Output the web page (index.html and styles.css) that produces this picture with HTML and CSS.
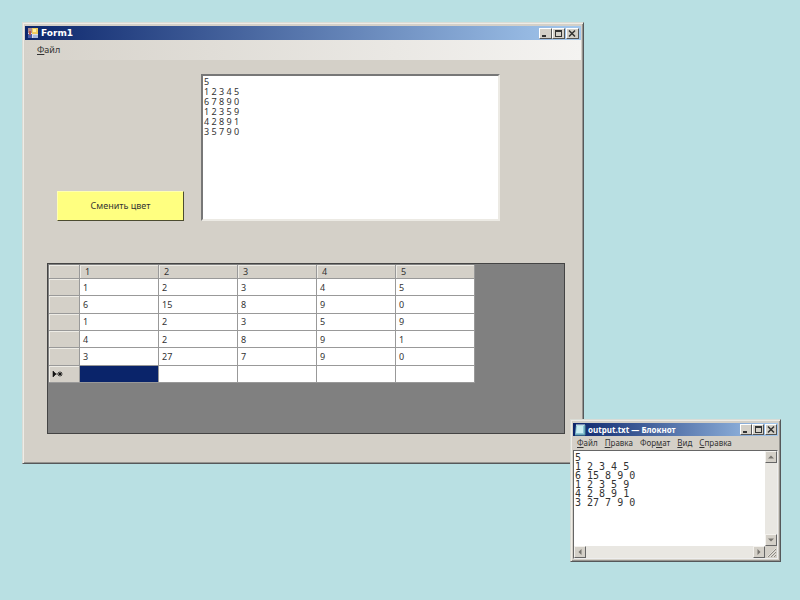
FILE: index.html
```html
<!DOCTYPE html>
<html lang="ru">
<head>
<meta charset="utf-8">
<title>Form1</title>
<link rel="stylesheet" href="styles.css">
</head>
<body>
<main class="desktop">
  <section class="window form-window" aria-label="Form1">
    <header class="titlebar">
      <svg class="app-icon" viewBox="0 0 12 12" aria-hidden="true">
        <rect x="1" y="1" width="10" height="10" fill="#d9dde8"/>
        <rect x="1" y="1" width="4" height="5" fill="#b08a8c"/>
        <rect x="5" y="1" width="6" height="6" fill="#f0cc60"/>
        <rect x="6" y="2" width="3" height="3" fill="#fdf0a8"/>
        <rect x="1" y="7" width="4" height="4" fill="#4a5ea8"/>
        <rect x="2" y="4" width="2" height="4" fill="#b8564c"/>
        <rect x="6" y="8" width="5" height="3" fill="#a9bbe0"/>
      </svg>
      <h1 class="title">Form1</h1>
      <div class="controls">
        <button class="ctl" aria-label="Свернуть"><svg viewBox="0 0 10 9"><path d="M2 7h4" stroke="#333" stroke-width="2"/></svg></button>
        <button class="ctl" aria-label="Развернуть"><svg viewBox="0 0 10 9"><path d="M2 1.500h7M2.500 1v7M8.500 1v7M2 7.500h7M2 2.500h7" stroke="#333"/></svg></button>
        <button class="ctl ctl-close" aria-label="Закрыть"><svg viewBox="0 0 10 9"><path d="M2 1.500l6 6M8 1.500l-6 6" stroke="#333" stroke-width="1.500"/></svg></button>
      </div>
    </header>
    <nav class="menu form-menu"><button><u>Ф</u>айл</button></nav>
    <div class="form-body">
      <div class="top-row">
        <button class="color-button">Сменить цвет</button>
        <textarea class="source" aria-label="Исходные данные" spellcheck="false">5
1 2 3 4 5
6 7 8 9 0
1 2 3 5 9
4 2 8 9 1
3 5 7 9 0</textarea>
      </div>
      <div class="grid-panel">
        <table class="grid">
          <thead><tr><th class="row-head"></th><th>1</th><th>2</th><th>3</th><th>4</th><th>5</th></tr></thead>
          <tbody>
            <tr><th></th><td>1</td><td>2</td><td>3</td><td>4</td><td>5</td></tr>
            <tr><th></th><td>6</td><td>15</td><td>8</td><td>9</td><td>0</td></tr>
            <tr><th></th><td>1</td><td>2</td><td>3</td><td>5</td><td>9</td></tr>
            <tr><th></th><td>4</td><td>2</td><td>8</td><td>9</td><td>1</td></tr>
            <tr><th></th><td>3</td><td>27</td><td>7</td><td>9</td><td>0</td></tr>
            <tr><th class="marker"><svg viewBox="0 0 12 8" aria-label="Новая строка"><path d="M1 1v6l3-3zM3 4h3" fill="#111" stroke="#111" stroke-width=".6"/><path d="M8 1.500v5M5.500 4h5M6.300 2.300l3.400 3.400M9.700 2.300l-3.400 3.400" stroke="#111"/></svg></th><td class="selected"></td><td></td><td></td><td></td><td></td></tr>
          </tbody>
        </table>
      </div>
    </div>
  </section>

  <section class="window notepad" aria-label="output.txt">
    <header class="titlebar">
      <svg class="app-icon" viewBox="0 0 12 12" aria-hidden="true">
        <path d="M2 1h9v10H1z" fill="#8cc6d6"/>
        <path d="M3 2h6v7H2z" fill="#c9eef2"/>
        <path d="M2 1h9" stroke="#e8f4f4"/>
        <path d="M11 1v10H1" stroke="#4d8d9c" fill="none"/>
      </svg>
      <h2 class="title">output.txt — Блокнот</h2>
      <div class="controls">
        <button class="ctl" aria-label="Свернуть"><svg viewBox="0 0 10 9"><path d="M2 7h4" stroke="#333" stroke-width="2"/></svg></button>
        <button class="ctl" aria-label="Развернуть"><svg viewBox="0 0 10 9"><path d="M2 1.500h7M2.500 1v7M8.500 1v7M2 7.500h7M2 2.500h7" stroke="#333"/></svg></button>
        <button class="ctl ctl-close" aria-label="Закрыть"><svg viewBox="0 0 10 9"><path d="M2 1.500l6 6M8 1.500l-6 6" stroke="#333" stroke-width="1.500"/></svg></button>
      </div>
    </header>
    <nav class="menu note-menu">
      <button><u>Ф</u>айл</button><button><u>П</u>равка</button><button>Фор<u>м</u>ат</button><button><u>В</u>ид</button><button><u>С</u>правка</button>
    </nav>
    <div class="editor">
      <textarea class="output" aria-label="Текст" spellcheck="false">5
1 2 3 4 5
6 15 8 9 0
1 2 3 5 9
4 2 8 9 1
3 27 7 9 0</textarea>
      <div class="scroll scroll-v">
        <button aria-label="Вверх"><svg viewBox="0 0 8 8"><path d="M1 5.500h6l-3-3z"/></svg></button>
        <button aria-label="Вниз"><svg viewBox="0 0 8 8"><path d="M1 2.500h6l-3 3z"/></svg></button>
      </div>
      <div class="scroll scroll-h">
        <button aria-label="Влево"><svg viewBox="0 0 8 8"><path d="M5.500 1v6l-3-3z"/></svg></button>
        <button aria-label="Вправо"><svg viewBox="0 0 8 8"><path d="M2.500 1v6l3-3z"/></svg></button>
      </div>
      <svg class="grip" viewBox="0 0 12 12" aria-hidden="true"><path d="M3 11l8-8M6 11l5-5M9 11l2-2" stroke="#8c8983"/><path d="M2 11l9-9M5 11l6-6M8 11l3-3" stroke="#f4f2ee" stroke-width=".5"/></svg>
    </div>
  </section>
</main>
</body>
</html>
```
FILE: styles.css
```css
* { box-sizing: border-box; }

body {
  margin: 0;
  background: #b9e0e3;
  color: #333;
  font: 9px/10px "Noto Sans", "Open Sans", sans-serif;
}

button, textarea { font: inherit; color: inherit; margin: 0; padding: 0; border: 0; }
svg { display: block; fill: none; }

.desktop { position: relative; min-height: 100vh; }

.window {
  position: absolute;
  display: flex;
  flex-direction: column;
  background: #d4d0c8;
  border: 1px solid;
  border-color: #d9dcd6 #55585a #55585a #d9dcd6;
}
.form-window {
  top: 22px;
  left: 22px;
  right: 216px;
  padding: 3px 2px 2px;
  box-shadow: inset 1px 1px #eeece6, inset -1px -1px #96948f;
}
.notepad {
  right: 19px;
  bottom: 38px;
  width: 211px;
  padding: 3px 2px 2px;
  box-shadow: inset 1px 1px #eeece6, inset -1px -1px #96948f;
}

.titlebar {
  display: flex;
  align-items: center;
  gap: 2px;
  height: 14px;
  padding: 0 2px;
  background: linear-gradient(90deg, #0c266c, #a4c8ee);
}
.notepad .titlebar { height: 13px; padding: 0 1px; }
.app-icon { width: 12px; height: 12px; }
.title {
  flex: 1;
  margin: 0;
  color: #fff;
  font: bold 9px/12px "DejaVu Sans", sans-serif;
  white-space: nowrap;
}
.notepad .title { font: bold 8px/12px "Noto Sans", sans-serif; }

.controls { display: flex; }
.ctl {
  width: 13px;
  height: 11px;
  background: #d4d0c8;
  border: 1px solid;
  border-color: #fff #555 #555 #fff;
}
.ctl svg { width: 10px; height: 9px; }
.ctl-close { margin-left: 1px; }
.notepad .ctl { width: 12px; }

.menu { display: flex; align-items: center; }
.menu button { background: none; }
.form-menu {
  height: 20px;
  padding: 0 12px;
  background: linear-gradient(90deg, #d6d2ca, #f4f3f1);
}
.note-menu { height: 14px; padding: 0 4px; gap: 7px; font-size: 8px; }

.form-body { padding: 14px 16px 27px 22px; }
.top-row {
  display: flex;
  align-items: flex-end;
  gap: 17px;
  padding: 0 65px 0 10px;
}
.color-button {
  width: 127px;
  height: 30px;
  background: #ffff80;
  border: 1px solid;
  border-color: #ffffb0 #4c4c30 #4c4c30 #ffffb0;
}
.source {
  flex: 1;
  min-width: 0;
  height: 147px;
  padding: 1px;
  resize: none;
  overflow: hidden;
  background: #fff;
  border: 2px solid;
  border-color: #777 #eceae4 #eceae4 #777;
}

.grid-panel {
  height: 171px;
  margin-top: 42px;
  padding: 1px 0 0 1px;
  background: #808080;
  border: 1px solid #444;
}
.grid {
  width: 426px;
  max-width: 100%;
  height: 118px;
  table-layout: fixed;
  border-collapse: separate;
  border-spacing: 0;
}
.grid th, .grid td {
  height: 17px;
  padding: 1px 3px 0;
  border: solid #999;
  border-width: 0 1px 1px 0;
  text-align: left;
  font-weight: normal;
}
.grid td { background: #fff; }
.grid th { background: #d4d0c8; box-shadow: inset 1px 1px #eeece6; }
.grid thead th { height: 14px; padding-left: 5px; }
.grid .row-head { width: 31px; }
.grid .selected { background: #0a246a; }
.marker svg { width: 12px; height: 8px; }

.editor {
  display: grid;
  grid-template-columns: 1fr 12px;
  grid-template-rows: 95px 12px;
  border: 1px solid;
  border-color: #666 #eee #eee #666;
}
.output {
  width: 100%;
  height: 100%;
  padding: 2px 1px;
  resize: none;
  overflow: hidden;
  background: #fff;
  font: 10px/9px "DejaVu Sans Mono", monospace;
}
.scroll { display: flex; justify-content: space-between; background: #e9e7e2; }
.scroll-v { flex-direction: column; }
.scroll button {
  width: 12px;
  height: 12px;
  padding: 1px;
  background: #d4d0c8;
  border: 1px solid;
  border-color: #f4f2ee #666 #666 #f4f2ee;
}
.scroll path { fill: #77746f; }
.grip { width: 12px; height: 12px; }
```
